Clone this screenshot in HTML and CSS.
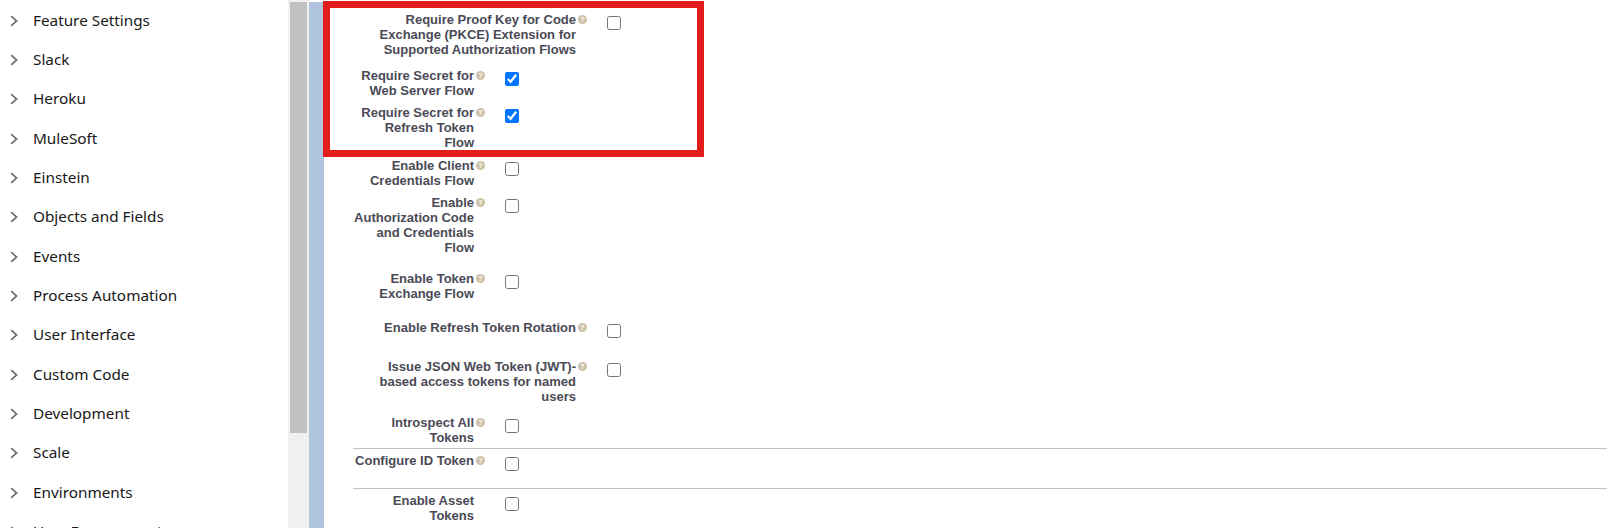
FILE: index.html
```html
<!DOCTYPE html>
<html lang="en">
<head>
  <meta charset="UTF-8">
  <title>Connected App Settings</title>
  <link rel="stylesheet" href="styles.css">
</head>
<body>
  <div class="page">
    <nav class="setup-tree">
      <div class="tree-item"><svg class="chevron" viewBox="0 0 8 12"><path d="M1.2 1.2 6.6 6 1.2 10.8"/></svg><span>Feature Settings</span></div>
      <div class="tree-item"><svg class="chevron" viewBox="0 0 8 12"><path d="M1.2 1.2 6.6 6 1.2 10.8"/></svg><span>Slack</span></div>
      <div class="tree-item"><svg class="chevron" viewBox="0 0 8 12"><path d="M1.2 1.2 6.6 6 1.2 10.8"/></svg><span>Heroku</span></div>
      <div class="tree-item"><svg class="chevron" viewBox="0 0 8 12"><path d="M1.2 1.2 6.6 6 1.2 10.8"/></svg><span>MuleSoft</span></div>
      <div class="tree-item"><svg class="chevron" viewBox="0 0 8 12"><path d="M1.2 1.2 6.6 6 1.2 10.8"/></svg><span>Einstein</span></div>
      <div class="tree-item"><svg class="chevron" viewBox="0 0 8 12"><path d="M1.2 1.2 6.6 6 1.2 10.8"/></svg><span>Objects and Fields</span></div>
      <div class="tree-item"><svg class="chevron" viewBox="0 0 8 12"><path d="M1.2 1.2 6.6 6 1.2 10.8"/></svg><span>Events</span></div>
      <div class="tree-item"><svg class="chevron" viewBox="0 0 8 12"><path d="M1.2 1.2 6.6 6 1.2 10.8"/></svg><span>Process Automation</span></div>
      <div class="tree-item"><svg class="chevron" viewBox="0 0 8 12"><path d="M1.2 1.2 6.6 6 1.2 10.8"/></svg><span>User Interface</span></div>
      <div class="tree-item"><svg class="chevron" viewBox="0 0 8 12"><path d="M1.2 1.2 6.6 6 1.2 10.8"/></svg><span>Custom Code</span></div>
      <div class="tree-item"><svg class="chevron" viewBox="0 0 8 12"><path d="M1.2 1.2 6.6 6 1.2 10.8"/></svg><span>Development</span></div>
      <div class="tree-item"><svg class="chevron" viewBox="0 0 8 12"><path d="M1.2 1.2 6.6 6 1.2 10.8"/></svg><span>Scale</span></div>
      <div class="tree-item"><svg class="chevron" viewBox="0 0 8 12"><path d="M1.2 1.2 6.6 6 1.2 10.8"/></svg><span>Environments</span></div>
      <div class="tree-item"><svg class="chevron" viewBox="0 0 8 12"><path d="M1.2 1.2 6.6 6 1.2 10.8"/></svg><span>User Engagement</span></div>
    </nav>

    <div class="scroll-track"><div class="scroll-thumb"></div></div>
    <div class="block-edge"></div>

    <main class="detail">
      <!-- highlight around the secret/PKCE settings -->
      <div class="callout"></div>

      <div class="row wide first">
        <div class="label"><span class="label-text">Require Proof Key for Code Exchange (PKCE) Extension for Supported Authorization Flows</span><span class="help">?</span></div>
        <input type="checkbox" class="check">
      </div>
      <div class="row gap-s">
        <div class="label"><span class="label-text">Require Secret for Web Server Flow</span><span class="help">?</span></div>
        <input type="checkbox" class="check" checked>
      </div>
      <div class="row">
        <div class="label"><span class="label-text">Require Secret for Refresh Token Flow</span><span class="help">?</span></div>
        <input type="checkbox" class="check" checked>
      </div>
      <div class="row">
        <div class="label"><span class="label-text">Enable Client Credentials Flow</span><span class="help">?</span></div>
        <input type="checkbox" class="check">
      </div>
      <div class="row">
        <div class="label"><span class="label-text">Enable Authorization Code and Credentials Flow</span><span class="help">?</span></div>
        <input type="checkbox" class="check">
      </div>
      <div class="row gap-l">
        <div class="label"><span class="label-text">Enable Token Exchange Flow</span><span class="help">?</span></div>
        <input type="checkbox" class="check">
      </div>
      <div class="row wide gap-xl">
        <div class="label"><span class="label-text">Enable Refresh Token Rotation</span><span class="help">?</span></div>
        <input type="checkbox" class="check">
      </div>
      <div class="row wide gap-xxl">
        <div class="label"><span class="label-text">Issue JSON Web Token (JWT)-based access tokens for named users</span><span class="help">?</span></div>
        <input type="checkbox" class="check">
      </div>
      <div class="row gap-m">
        <div class="label"><span class="label-text">Introspect All Tokens</span><span class="help">?</span></div>
        <input type="checkbox" class="check">
      </div>

      <div class="divider"></div>
      <div class="row after-divider">
        <div class="label"><span class="label-text">Configure ID Token</span><span class="help">?</span></div>
        <input type="checkbox" class="check">
      </div>

      <div class="divider"></div>
      <div class="row after-divider tight">
        <div class="label"><span class="label-text">Enable Asset Tokens</span><span class="help blank"></span></div>
        <input type="checkbox" class="check">
      </div>
    </main>
  </div>
</body>
</html>
```

FILE: styles.css
```css
html, body {
  margin: 0;
  height: 100%;
  overflow: hidden;
  background: #fff;
}

.page {
  display: flex;
  height: 100vh;
}

/* setup tree */
.setup-tree {
  width: 288px;
  flex: none;
  font-family: "Noto Sans", sans-serif;
  font-size: 15.3px;
  color: #181818;
}
.tree-item {
  display: flex;
  align-items: center;
  height: 39.33px;
  padding-left: 10px;
  white-space: nowrap;
}
.chevron {
  width: 8px;
  height: 12px;
  margin: 2px 15px 0 0;
  fill: none;
  stroke: #6f6f6f;
  stroke-width: 1.7;
}

.scroll-track {
  width: 21px;
  flex: none;
  background: #f0f0f0;
  padding-top: 2px;
}
.scroll-thumb {
  width: 17px;
  height: 431px;
  margin-left: 2px;
  background: #c1c1c1;
}

.block-edge {
  width: 15px;
  flex: none;
  margin-top: 2px;
  background: #b0c4de;
}

/* detail list */
.detail {
  position: relative;
  flex: 1;
  padding-left: 29px;
  font-family: "Liberation Sans", Arial, sans-serif;
  font-size: 13px;
  font-weight: bold;
  line-height: 15px;
  color: #4a4a56;
}
.callout {
  position: absolute;
  left: -1px;
  top: 1px;
  width: 381px;
  height: 156px;
  box-sizing: border-box;
  border: 7px solid #e31c1c;
}

.row {
  display: flex;
  align-items: flex-start;
  margin-top: 7.5px;
}
.row.first { margin-top: 12px; }
.row.gap-s { margin-top: 10.5px; }
.row.gap-m { margin-top: 11.5px; }
.row.gap-l { margin-top: 15.7px; }
.row.gap-xl { margin-top: 19.6px; }
.row.gap-xxl { margin-top: 20.4px; }
.row.after-divider { margin-top: 4px; }
.row.tight { margin-top: 4.4px; }

.label {
  display: flex;
  align-items: flex-start;
}
.label-text {
  width: 121px;
  text-align: right;
}
.wide .label-text {
  width: 223px;
}
.help {
  flex: none;
  width: 9px;
  height: 9px;
  margin: 3px 0 0 2px;
  border-radius: 50%;
  background: #cdc1a6;
  color: #fff;
  font-size: 7px;
  line-height: 9px;
  text-align: center;
}
.help.blank {
  visibility: hidden;
}

.check {
  width: 14px;
  height: 14px;
  margin: 4px 0 0 20px;
}

.divider {
  margin-top: 2.6px;
  border-top: 1px solid #c2c2c2;
}
.divider + .row + .divider {
  margin-top: 17px;
}
```
